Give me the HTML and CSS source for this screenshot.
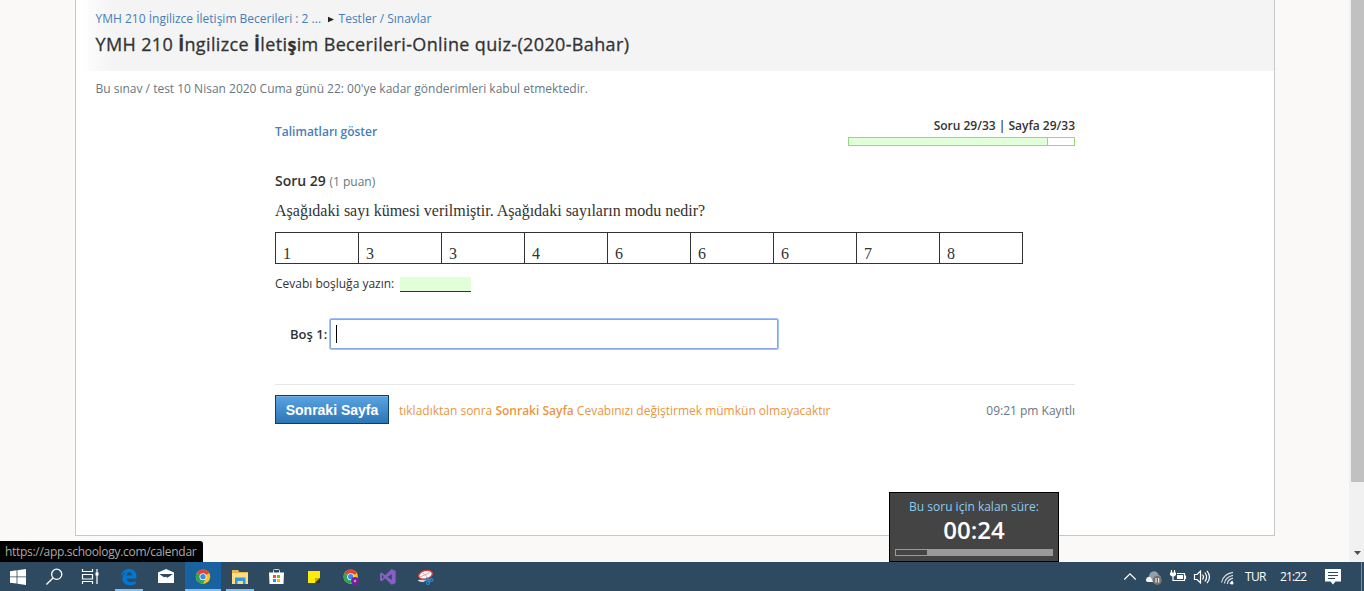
FILE: index.html
```html
<!DOCTYPE html>
<html lang="tr">
<head>
<meta charset="utf-8">
<title>YMH 210 İngilizce İletişim Becerileri</title>
<link rel="stylesheet" href="styles.css">
</head>
<body>
<div class="screen">
  <div class="browser">
    <main class="page">
      <header class="page-head">
        <nav class="crumbs"><a class="crumb-course">YMH 210 İngilizce İletişim Becerileri : 2 ...</a><svg class="crumb-arrow" width="6" height="7" viewBox="0 0 6 7"><path d="M0 .7L6 3.5 0 6.3z" fill="#222"/></svg><a class="crumb-tests">Testler / Sınavlar</a></nav>
        <h1 class="title">YMH 210 <b>İ</b>ngilizce <b>İ</b>leti<b>ş</b>im Becerileri-Online quiz-(2020-Bahar)</h1>
      </header>
      <p class="deadline">Bu sınav / test 10 Nisan 2020 Cuma günü 22: 00'ye kadar gönderimleri kabul etmektedir.</p>
      <section class="quiz">
        <div class="quiz-top">
          <a class="instructions">Talimatları göster</a>
          <div class="progress">
            <div class="progress-label">Soru 29/33 | Sayfa 29/33</div>
            <div class="progress-bar"><div class="progress-fill"></div></div>
          </div>
        </div>
        <h2 class="question"><span class="question-no">Soru 29</span> <span class="points">(1 puan)</span></h2>
        <p class="prompt">Aşağıdaki sayı kümesi verilmiştir. Aşağıdaki sayıların modu nedir?</p>
        <div class="numbers"><span>1</span><span>3</span><span>3</span><span>4</span><span>6</span><span>6</span><span>6</span><span>7</span><span>8</span></div>
        <div class="blank-row"><span class="blank-label">Cevabı boşluğa yazın:</span><span class="blank"></span></div>
        <div class="answer"><label class="answer-label">Boş 1:</label><div class="answer-input"><i class="caret"></i></div></div>
        <footer class="quiz-foot">
          <button class="next">Sonraki Sayfa</button>
          <p class="warning">tıkladıktan sonra <b>Sonraki Sayfa</b> Cevabınızı değiştirmek mümkün olmayacaktır</p>
          <span class="saved">09:21 pm Kayıtlı</span>
        </footer>
      </section>
    </main>
    <div class="scrollbar"><div class="thumb"></div><svg class="scroll-down" width="7" height="4" viewBox="0 0 7 4"><path d="M0 0h7L3.5 4z" fill="#505050"/></svg></div>
    <aside class="timer">
      <div class="timer-label">Bu soru için kalan süre:</div>
      <div class="timer-value">00:24</div>
      <div class="timer-bar"><div class="timer-fill"></div></div>
    </aside>
    <div class="status">https://app.schoology.com/calendar</div>
  </div>
  <div class="taskbar">
    <div class="apps">
      <svg class="app" viewBox="0 0 37 29"><path d="M11 9.2l6.6-.9v6.2H11zM18.4 8.2L27 7v7.5h-8.6zM11 15.3h6.6v6.3l-6.6-.9zM18.4 15.3H27V23l-8.6-1.2z" fill="#fff"/></svg>
      <svg class="app" viewBox="0 0 37 29"><g fill="none" stroke="#fff" stroke-width="1.3"><circle cx="20.7" cy="12.3" r="5.1"/><path d="M17 16l-6.6 6.5"/></g></svg>
      <svg class="app" viewBox="0 0 37 29"><path d="M9.5 7v2.500h10V7M9.500 22v-2.500h10V22M9.500 12.500h10v4.500h-10zM24 7v15" fill="none" stroke="#fff" stroke-width="1.2"/><path d="M22.500 10.500h3v3h-3z" fill="#fff"/></svg>
      <svg class="app running" viewBox="0 0 37 29"><path d="M11 14.2C11.6 9.6 15 7 19 7c4.800 0 7.500 3.300 7.500 7.600v1.900H16.300c.2 2.600 2.200 3.700 4.700 3.700 1.700 0 3.300-.5 4.600-1.300v3.200c-1.500.8-3.300 1.100-5.200 1.100-4.900 0-8-2.400-8-6.800 0-2.700 1.500-4.900 3.900-6.100-2.200.4-4 1.700-5.300 3.900zm5.400-.7h5.700c0-2-1-3.200-2.700-3.200-1.700 0-2.700 1.300-3 3.200z" fill="#0078d7" fill-rule="evenodd"/></svg>
      <svg class="app" viewBox="0 0 37 29"><path d="M11 10.500L19 7l8 3.500V21H11z" fill="#fff"/><path d="M12.300 12h13.500l-5.300 3.700L19 14.800l-2 .5z" fill="#2e4a60"/></svg>
      <svg class="app active" viewBox="0 0 37 29"><g transform="translate(19 14.700)"><circle r="7.200" fill="#f9c31d"/><path d="M0 0L-6.200-3.600A7.200 7.200 0 0 1 6.200-3.600z" fill="#e44435"/><path d="M0 0L-6.200-3.600A7.200 7.200 0 0 0-.3 7.200L3.100 1.800z" fill="#31a551"/><circle r="3.500" fill="#fff"/><circle r="2.700" fill="#4287ee"/></g></svg>
      <svg class="app running" viewBox="0 0 37 29"><path d="M11 8h6l1.500 2H27v12H11z" fill="#e9b64d"/><path d="M11 11h16v11H11z" fill="#fddc82"/><path d="M14 15.500h10.500V22H22v-3h-5.500v3H14z" fill="#3399dd"/></svg>
      <svg class="app" viewBox="0 0 37 29"><path d="M15.500 11V8.500q0-1 1-1h4q1 0 1 1V11" fill="none" stroke="#ddd"/><path d="M11 10.500h15l-.5 11.500h-14z" fill="#fff"/><path d="M15 13h3v3h-3z" fill="#f25022"/><path d="M19 13h3v3h-3z" fill="#7fba00"/><path d="M15 17h3v3h-3z" fill="#00a4ef"/><path d="M19 17h3v3h-3z" fill="#ffb900"/></svg>
      <svg class="app" viewBox="0 0 37 29"><path d="M13 9h12v7l-5 5h-7z" fill="#ffeb0a"/><path d="M20 21v-5h5z" fill="#c9ad00"/><path d="M20 21l5-5v5z" fill="#333"/></svg>
      <svg class="app" viewBox="0 0 37 29"><g transform="translate(18.700 14.700)"><circle r="7.200" fill="#f9c31d"/><path d="M0 0L-6.200-3.600A7.200 7.200 0 0 1 6.200-3.600z" fill="#e44435"/><path d="M0 0L-6.200-3.600A7.200 7.200 0 0 0-.3 7.200L3.100 1.800z" fill="#31a551"/><circle r="3.500" fill="#fff"/><circle r="2.700" fill="#4287ee"/><circle cx="4.300" cy="4.300" r="3.900" fill="#7b1fa2"/><circle cx="4.300" cy="4.300" r="1.200" fill="#c99ad8"/></g></svg>
      <svg class="app" viewBox="0 0 37 29"><path d="M22.700 7l4 1.900v12l-4 1.900-6.500-6.200-3.500 2.700-1.700-.8v-7.200l1.700-.8 3.500 2.700zM13 12.900v4l2-2zm9.700-.900l-4 2.900 4 3z" fill="#865fc5" fill-rule="evenodd"/></svg>
      <svg class="app" viewBox="0 0 37 29"><path d="M11.500 18q1.500 2.500 6 2l5-3z" fill="#ddd"/><ellipse cx="19.500" cy="12.800" rx="7" ry="4.200" transform="rotate(-15 19.500 12.800)" fill="#f6f6f6" stroke="#d83b3b" stroke-width="1.300"/><path d="M14 15l10-4.500M17 11l4 3.500" stroke="#c99" stroke-width=".8"/><path d="M17.500 17.500h8M20.500 15.500l3 5" stroke="#2b87d1" stroke-width="1.500"/><circle cx="22" cy="21" r="1.500" fill="none" stroke="#2b87d1" stroke-width="1.200"/><circle cx="25.500" cy="18" r="1.500" fill="none" stroke="#2b87d1" stroke-width="1.200"/></svg>
    </div>
    <div class="tray">
      <svg class="tray-icons" width="130" height="29" viewBox="1110 0 130 29"><g fill="none" stroke="#fff" stroke-width="1.200"><path d="M1124.300 17.500l5.700-5.700 5.700 5.700"/><path d="M1177 11.500h7.500v7h-9M1185.500 13.500v3.500M1171.500 8v3M1174.500 8v3M1173 14v4.500h2.500"/><path d="M1194.500 12.500h2.500l3.500-3.300v11.600l-3.500-3.300h-2.500zM1202.500 12.500q2 2.500 0 5M1204.800 10.500q3.500 4.500 0 9M1207 8.800q5 6.200 0 12.400"/></g><path d="M1170 10.500h6v2.500l-2 1.500h-2l-2-1.500zM1177 13h6v4h-6z" fill="#fff"/><path d="M1146 18.500q-.5-3.500 3-4 .5-5 5-5.200 3.500 0 4.600 3.700 2.400.5 2.400 3l-2 4h-9q-3.500 0-4-1.500z" fill="#8fa0ac"/><path d="M1146 18q1-3.500 4.500-3l3 5h-4.500q-3 0-3-2z" fill="#f4f4f4"/><circle cx="1157.300" cy="18.300" r="4.600" fill="#77716b"/><path d="M1156 16v4.600M1158.700 16v4.600" stroke="#fff"/><g fill="none" stroke="#d6dce0" stroke-width="1.200"><path d="M1221.500 20.500Q1223 12 1233 10.300M1224.300 21.500q1.200-6.700 8.700-8.200M1227.200 21.800q1-4.500 5.800-5.600"/><path d="M1230 22q.5-2.500 3-3"/></g><circle cx="1232" cy="21" r="1.500" fill="#fff"/></svg>
      <span class="lang">TUR</span>
      <span class="clock">21:22</span>
      <svg class="notes" width="16" height="16" viewBox="0 0 16 16"><path d="M0 0h16v12.500h-5.500L8 15.500l-2.500-3H0z" fill="#fff"/><path d="M3 3.500h10M3 6.500h10M3 9.500h7" stroke="#2e4a60"/></svg>
      <i class="desktop-edge"></i>
    </div>
  </div>
</div>
</body>
</html>
```
FILE: styles.css
```css
* { box-sizing: border-box; }
body { margin: 0; font-family: "Open Sans", sans-serif; font-size: 12px; color: #333; }
h1, h2, p { margin: 0; font-weight: 400; }
.screen { width: 1364px; height: 591px; display: flex; flex-direction: column; overflow: hidden; }
.browser { position: relative; height: 562px; display: flex; justify-content: space-between; padding-left: 75px; background: #faf9f7; }
.page { width: 1200px; height: 536px; background: #fff; border: 1px solid #c5c7c9; border-top: 0; white-space: nowrap; }
.page-head { height: 71px; padding: 9px 0 0 19.5px; background: linear-gradient(90deg, #fff 4px, #f4f4f4 36px); }
.crumbs { display: flex; align-items: center; height: 20px; line-height: 20px; color: #477db8; }
.crumb-arrow { margin: 0 5px 0 6.5px; }
.title { height: 30px; line-height: 30px; font-size: 18px; letter-spacing: .36px; color: #333; -webkit-text-stroke: .3px #333; }
.deadline { height: 34px; line-height: 36px; padding-left: 19.5px; color: #677783; }
.quiz { width: 800px; margin-left: 199px; }
.quiz-top { display: flex; justify-content: space-between; height: 62px; }
.instructions { line-height: 16px; margin-top: 19px; font-weight: 600; color: #477db8; }
.progress { width: 227px; margin-top: 13px; }
.progress-label { height: 19px; line-height: 16px; text-align: right; font-weight: 600; }
.progress-bar { height: 9px; border: 1px solid #9bd77f; }
.progress-fill { width: 199px; height: 7px; background: #e1ffd9; border-right: 1px solid #9bd77f; }
.question { height: 28px; line-height: 28px; font-size: 14px; }
.question-no { font-weight: 600; }
.points { font-size: 12px; color: #677783; }
.prompt { height: 37px; font: 16px/32px "Liberation Serif", serif; }
.numbers { display: flex; width: 748px; height: 32px; border: 1px solid #333; font: 16px/20px "Liberation Serif", serif; }
.numbers span { flex: none; width: 83px; padding: 11px 0 0 7px; border-right: 1px solid #333; }
.numbers span:last-child { width: 82px; border-right: 0; }
.blank-row { display: flex; height: 54px; padding-top: 12px; }
.blank-label { width: 125px; line-height: 16px; }
.blank { width: 71px; height: 15px; margin-top: 1px; background: #e1ffd9; border-bottom: 1px solid #333; }
.answer { display: flex; height: 66px; padding-left: 15px; }
.answer-label { width: 39px; line-height: 32px; font-size: 13px; font-weight: 600; }
.answer-input { width: 450px; height: 32px; padding: 6px; border: 1px solid #a2c2fa; border-radius: 2px; box-shadow: inset 0 0 0 1px #86a6e4; }
.caret { display: block; width: 1px; height: 18px; background: #000; }
.quiz-foot { display: flex; align-items: flex-start; border-top: 1px solid #e6e6e6; padding-top: 10px; line-height: 32px; }
.next { width: 114px; height: 29px; padding: 2px 0 0; border: 1px solid #0c4265; background: linear-gradient(#5aa4e3, #2d76b5); box-shadow: inset 0 1px #76b1e2; color: #fff; font: bold 14px/25px "Liberation Sans", sans-serif; }
.warning { margin-left: 10px; color: #eb9540; }
.warning b { font-weight: 600; }
.saved { margin-left: auto; color: #677783; }
.scrollbar { display: flex; flex-direction: column; justify-content: space-between; width: 15px; padding: 0 0 7px 2px; background: #f1f1f1; }
.thumb { height: 482px; background: #c1c1c1; }
.scroll-down { margin-left: 3px; }
.timer { position: absolute; left: 889px; top: 492px; width: 170px; height: 70px; padding: 5px 5px 0; border: 1px solid #000; background: #444; text-align: center; }
.timer-label { line-height: 17px; color: #88ccf3; }
.timer-value { height: 34px; line-height: 30px; font-size: 24px; font-weight: 600; color: #fff; }
.timer-bar { height: 7px; padding: 1px; background: #999; }
.timer-fill { width: 31px; height: 5px; background: #444; }
.status { position: absolute; left: 0; top: 541px; width: 203px; height: 21px; padding-left: 5px; line-height: 22px; letter-spacing: -.3px; background: #000; border-top-right-radius: 3px; color: #aaa; white-space: nowrap; }
.taskbar { display: flex; justify-content: space-between; height: 29px; background: #2e4a60; }
.apps { display: flex; margin-left: -1px; }
.app { width: 37px; height: 29px; }
.running { background: linear-gradient(#85bfed, #85bfed) 5px 27px / 28px 2px no-repeat; }
.active { background: linear-gradient(#1862a0 27px, #85bfed 27px) 1px 0 / 36px 29px no-repeat; }
.tray { display: flex; align-items: center; color: #fff; }
.lang { width: 35px; padding-left: 5px; letter-spacing: -.7px; }
.clock { width: 50px; padding-left: 5px; letter-spacing: -.9px; }
.notes { margin-right: 20px; }
.desktop-edge { width: 1px; height: 29px; margin-right: 2px; background: #7a8d9b; }
```
